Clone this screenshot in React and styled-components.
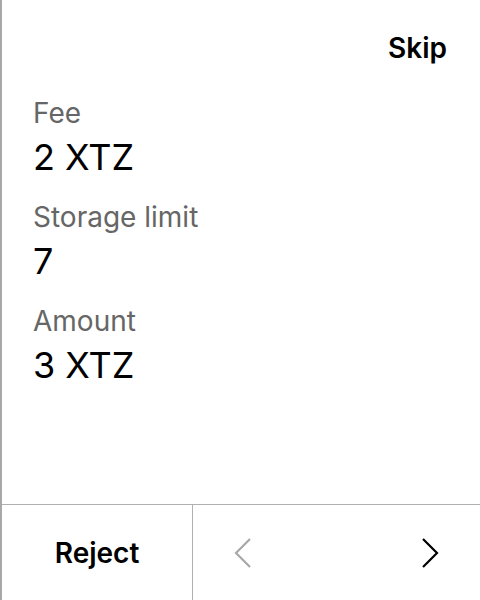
import styled, { createGlobalStyle } from "styled-components";

const GlobalStyle = createGlobalStyle`
  html, body {
    margin: 0;
    padding: 0;
    background: #ffffff;
  }
  body {
    font-family: Inter, "Liberation Sans", sans-serif;
  }
`;

const Screen = styled.div`
  width: 480px;
  height: 600px;
  box-sizing: border-box;
  border-left: 2px solid #a8a8a8;
  display: flex;
  flex-direction: column;
  background: #fff;
`;

const TopBar = styled.div`
  display: flex;
  justify-content: flex-end;
  align-items: center;
  height: 96px;
  padding-right: 33px;
  box-sizing: border-box;
`;

const SkipButton = styled.button`
  border: none;
  background: none;
  padding: 0;
  font-family: inherit;
  font-size: 28px;
  line-height: 40px;
  font-weight: 600;
  color: #000;
`;

const Fields = styled.div`
  flex: 1;
  display: flex;
  flex-direction: column;
  gap: 16px;
  padding: 0 0 0 31px;
  margin-top: -3px;
`;

const Field = styled.div`
  display: flex;
  flex-direction: column;
`;

const Label = styled.span`
  font-size: 28px;
  line-height: 40px;
  color: #666666;
`;

const Value = styled.span`
  font-size: 36px;
  line-height: 48px;
  color: #000;
`;

const Footer = styled.div`
  height: 96px;
  box-sizing: border-box;
  border-top: 1px solid #b0b0b0;
  display: flex;
`;

const RejectButton = styled.button`
  width: 191px;
  border: none;
  border-right: 1px solid #b0b0b0;
  background: none;
  font-family: inherit;
  font-size: 28px;
  font-weight: 600;
  color: #000;
`;

const Pager = styled.div`
  flex: 1;
  display: flex;
  justify-content: space-between;
`;

const ArrowButton = styled.button`
  width: 100px;
  border: none;
  background: none;
  display: flex;
  align-items: center;
  justify-content: center;
  color: ${({ disabled }) => (disabled ? "#a8a8a8" : "#000")};
`;

const Chevron = ({ dir }) => (
  <svg width="20" height="32" viewBox="0 0 20 32" fill="none">
    <path
      d={dir === "left" ? "M17 2 L3 16 L17 30" : "M3 2 L17 16 L3 30"}
      stroke="currentColor"
      strokeWidth="2.2"
    />
  </svg>
);

const fields = [
  { label: "Fee", value: "2 XTZ" },
  { label: "Storage limit", value: "7" },
  { label: "Amount", value: "3 XTZ" },
];

const App = () => {
  return (
    <>
      <GlobalStyle />
      <Screen>
        <TopBar>
          <SkipButton>Skip</SkipButton>
        </TopBar>
        <Fields>
          {fields.map((f) => (
            <Field key={f.label}>
              <Label>{f.label}</Label>
              <Value>{f.value}</Value>
            </Field>
          ))}
        </Fields>
        <Footer>
          <RejectButton>Reject</RejectButton>
          <Pager>
            <ArrowButton disabled>
              <Chevron dir="left" />
            </ArrowButton>
            <ArrowButton>
              <Chevron dir="right" />
            </ArrowButton>
          </Pager>
        </Footer>
      </Screen>
    </>
  );
};

export default App;
